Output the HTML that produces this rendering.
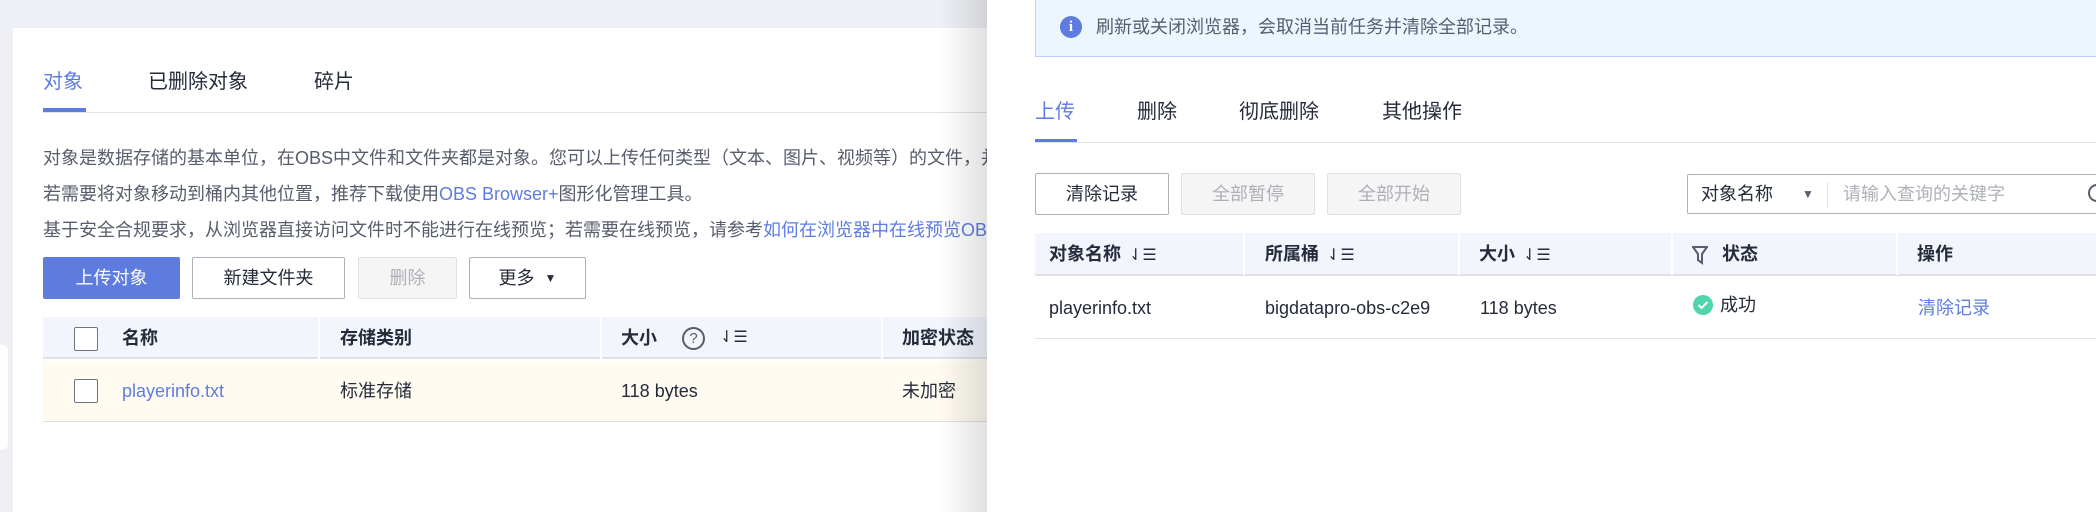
<!DOCTYPE html>
<html><head><meta charset="utf-8"><style>
*{margin:0;padding:0;box-sizing:border-box}
body{width:2096px;height:512px;overflow:hidden;background:#eef0f5;font-family:"Liberation Sans","Noto Sans CJK SC",sans-serif;color:#252b3a;position:relative}
.a{position:absolute;white-space:nowrap;line-height:24px}
.card{position:absolute;left:13px;top:28px;width:1000px;height:484px;background:#fff}
.tab{font-size:20px;color:#252b3a}
.p{font-size:18px;color:#575d6c}
.lnk{color:#5e7ce0}
.btn{position:absolute;height:42px;border:1px solid #adb0b8;border-radius:2px;font-size:18px;display:flex;align-items:center;justify-content:center;background:#fff;color:#252b3a;line-height:24px}
.dis{background:#f5f5f6;border-color:#dfe1e6;color:#adb0b8}
.th{font-size:18px;font-weight:bold}
.td{font-size:18px}
.cb{position:absolute;width:24px;height:24px;border:1px solid #71757f;border-radius:2px;background:#fff}
.sort{display:inline-block;font-weight:normal;font-size:16px;margin-left:8px}
</style></head><body>
<div class="card"></div>
<div class="a" style="left:0;top:345px;width:8px;height:105px;background:#fff;border-radius:0 6px 6px 0"></div>
<div class="a tab" style="left:43px;top:70px;color:#5e7ce0">对象</div>
<div class="a tab" style="left:148px;top:70px">已删除对象</div>
<div class="a tab" style="left:314px;top:70px">碎片</div>
<div class="a" style="left:43px;top:112px;width:960px;height:1px;background:#dfe1e6"></div>
<div class="a" style="left:43px;top:108px;width:43px;height:4px;background:#5e7ce0"></div>
<div class="a p" style="left:43px;top:146px">对象是数据存储的基本单位，在OBS中文件和文件夹都是对象。您可以上传任何类型（文本、图片、视频等）的文件，并</div>
<div class="a p" style="left:43px;top:182px">若需要将对象移动到桶内其他位置，推荐下载使用<span class="lnk">OBS Browser+</span>图形化管理工具。</div>
<div class="a p" style="left:43px;top:218px">基于安全合规要求，从浏览器直接访问文件时不能进行在线预览；若需要在线预览，请参考<span class="lnk">如何在浏览器中在线预览OBS</span></div>
<div class="btn" style="left:43px;top:257px;width:137px;background:#5e7ce0;border-color:#5e7ce0;color:#fff">上传对象</div>
<div class="btn" style="left:192px;top:257px;width:153px">新建文件夹</div>
<div class="btn dis" style="left:358px;top:257px;width:99px">删除</div>
<div class="btn" style="left:469px;top:257px;width:117px">更多 <span style="font-size:12px;margin-left:10px">▼</span></div>
<div class="a" style="left:43px;top:317px;width:960px;height:42px;background:#f2f5fc;border-bottom:2px solid #dfe1e6"></div>
<div class="a" style="left:318px;top:317px;width:2px;height:42px;background:#fff"></div>
<div class="a" style="left:600px;top:317px;width:2px;height:42px;background:#fff"></div>
<div class="a" style="left:881px;top:317px;width:2px;height:42px;background:#fff"></div>
<div class="cb" style="left:74px;top:327px"></div>
<div class="a th" style="left:122px;top:326px">名称</div>
<div class="a th" style="left:340px;top:326px">存储类别</div>
<div class="a th" style="left:621px;top:326px">大小</div>
<div class="a" style="left:682px;top:327px;width:23px;height:23px;border:2px solid #575d6c;border-radius:50%;font-size:15px;text-align:center;line-height:19px;color:#575d6c">?</div>
<div class="a" style="left:720px;top:326px;font-size:16px">⇃☰</div>
<div class="a th" style="left:902px;top:326px">加密状态</div>
<div class="a" style="left:43px;top:361px;width:960px;height:61px;background:#fffbf0;border-bottom:1px solid #dfe1e6"></div>
<div class="cb" style="left:74px;top:379px"></div>
<div class="a td lnk" style="left:122px;top:379px">playerinfo.txt</div>
<div class="a td" style="left:340px;top:379px">标准存储</div>
<div class="a td" style="left:621px;top:379px">118 bytes</div>
<div class="a td" style="left:902px;top:379px">未加密</div>
<div class="a" style="left:940px;top:0;width:47px;height:512px;background:linear-gradient(to right,rgba(0,0,0,0),rgba(0,0,0,0.12))"></div>
<div class="a" style="left:987px;top:0;width:1109px;height:512px;background:#fff"></div>
<div class="a" style="left:1035px;top:-2px;width:1070px;height:59px;background:#ebf6ff;border:1px solid #beccfa"></div>
<div class="a" style="left:1060px;top:16px;width:22px;height:22px;border-radius:50%;background:#5e7ce0;color:#fff;font-size:15px;font-weight:bold;text-align:center;line-height:22px;font-family:'Liberation Serif',serif">i</div>
<div class="a" style="left:1096px;top:15px;font-size:18px;color:#575d6c">刷新或关闭浏览器，会取消当前任务并清除全部记录。</div>
<div class="a tab" style="left:1035px;top:100px;color:#5e7ce0">上传</div>
<div class="a tab" style="left:1137px;top:100px">删除</div>
<div class="a tab" style="left:1239px;top:100px">彻底删除</div>
<div class="a tab" style="left:1382px;top:100px">其他操作</div>
<div class="a" style="left:1035px;top:142px;width:1061px;height:1px;background:#dfe1e6"></div>
<div class="a" style="left:1035px;top:139px;width:42px;height:3px;background:#5e7ce0"></div>
<div class="btn" style="left:1035px;top:173px;width:134px">清除记录</div>
<div class="btn dis" style="left:1181px;top:173px;width:134px">全部暂停</div>
<div class="btn dis" style="left:1327px;top:173px;width:134px">全部开始</div>
<div class="a" style="left:1687px;top:174px;width:420px;height:40px;border:1px solid #adb0b8;border-radius:2px"></div>
<div class="a" style="left:1701px;top:182px;font-size:18px">对象名称</div>
<div class="a" style="left:1802px;top:182px;font-size:12px;color:#575d6c">▼</div>
<div class="a" style="left:1827px;top:182px;width:1px;height:26px;background:#dfe1e6"></div>
<div class="a" style="left:1843px;top:182px;font-size:18px;color:#adb0b8">请输入查询的关键字</div>
<div class="a" style="left:2088px;top:184px;width:18px;height:18px;border:2px solid #575d6c;border-radius:50%"></div>
<div class="a" style="left:1035px;top:233px;width:1061px;height:43px;background:#f2f5fc;border-bottom:2px solid #dfe1e6"></div>
<div class="a" style="left:1243px;top:233px;width:2px;height:42px;background:#fff"></div>
<div class="a" style="left:1458px;top:233px;width:2px;height:42px;background:#fff"></div>
<div class="a" style="left:1671px;top:233px;width:2px;height:42px;background:#fff"></div>
<div class="a" style="left:1896px;top:233px;width:2px;height:42px;background:#fff"></div>
<div class="a th" style="left:1049px;top:242px">对象名称<span class="sort">⇃☰</span></div>
<div class="a th" style="left:1265px;top:242px">所属桶<span class="sort">⇃☰</span></div>
<div class="a th" style="left:1479px;top:242px">大小<span class="sort">⇃☰</span></div>
<svg class="a" style="left:1692px;top:245px" width="16" height="20" viewBox="0 0 16 20"><path d="M1 2h14l-5 7v9l-4-3V9z" fill="none" stroke="#575d6c" stroke-width="2"/></svg>
<div class="a th" style="left:1722px;top:242px">状态</div>
<div class="a th" style="left:1917px;top:242px">操作</div>
<div class="a" style="left:1035px;top:338px;width:1061px;height:1px;background:#dfe1e6"></div>
<div class="a td" style="left:1049px;top:296px">playerinfo.txt</div>
<div class="a td" style="left:1265px;top:296px">bigdatapro-obs-c2e9</div>
<div class="a td" style="left:1480px;top:296px">118 bytes</div>
<svg class="a" style="left:1693px;top:295px" width="20" height="20" viewBox="0 0 20 20"><circle cx="10" cy="10" r="10" fill="#50d4ab"/><path d="M5.5 10l3 3 6-6" fill="none" stroke="#fff" stroke-width="2"/></svg>
<div class="a td" style="left:1720px;top:293px">成功</div>
<div class="a td lnk" style="left:1918px;top:296px">清除记录</div>
</body></html>
